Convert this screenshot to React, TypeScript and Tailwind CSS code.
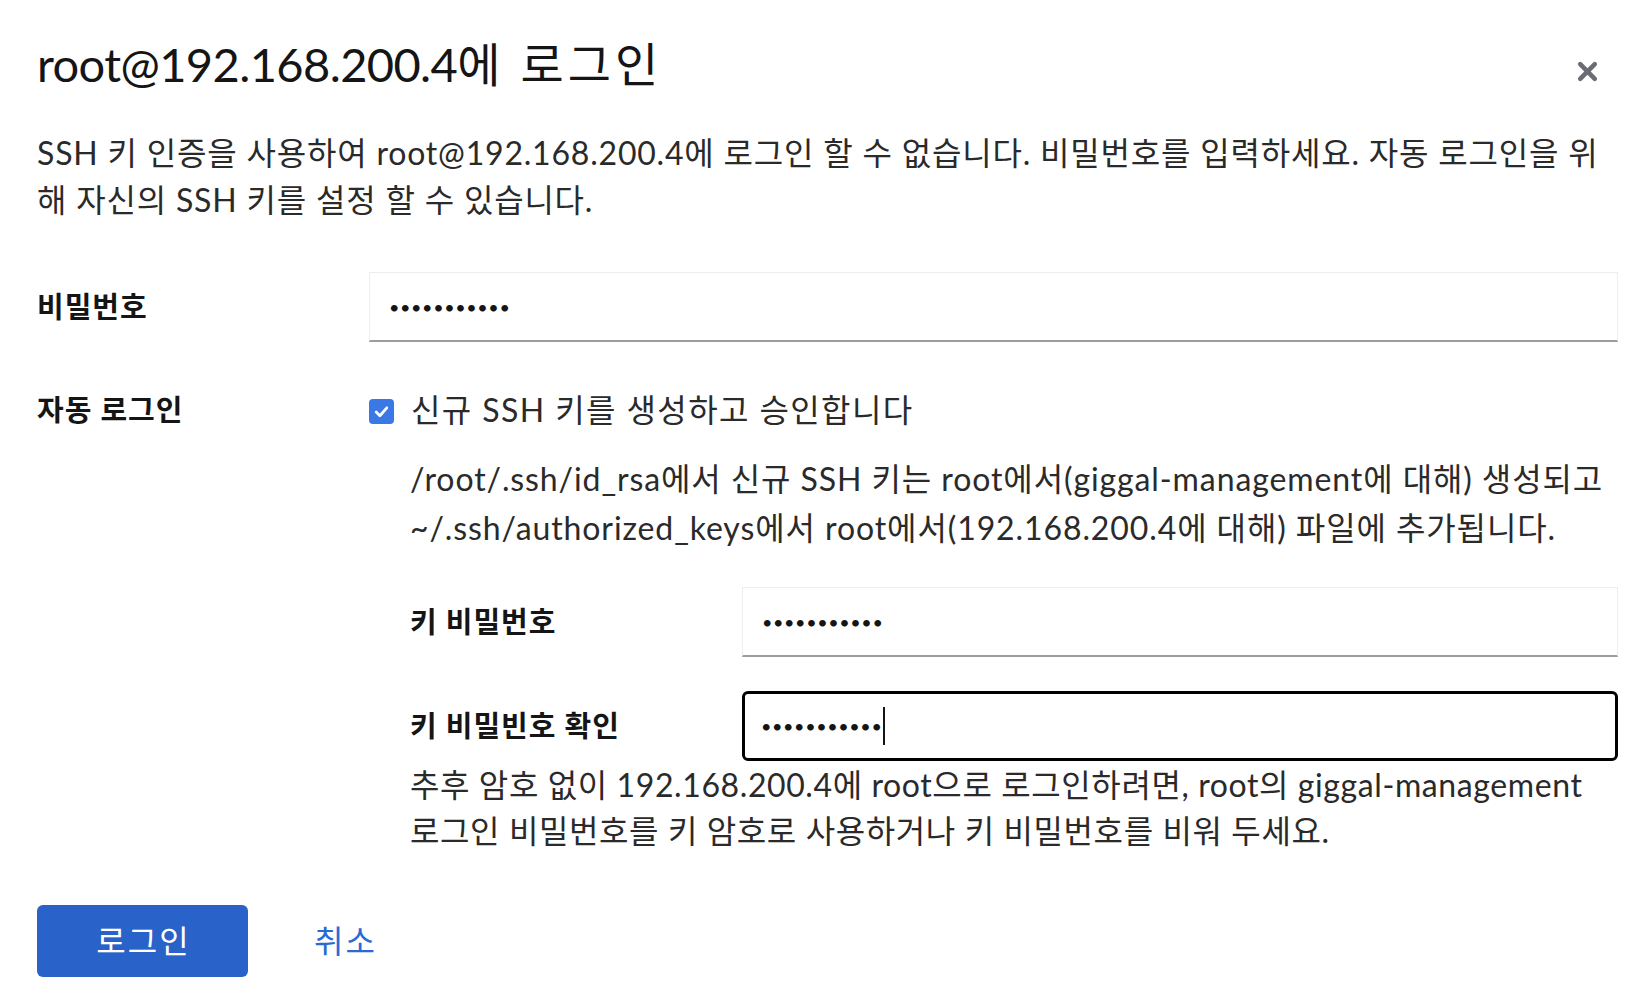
import React from 'react';

const font = "font-[Lato,'Noto_Sans_CJK_KR',sans-serif]";

function Dots({ caret = false }: { caret?: boolean }) {
  return (
    <span className="flex items-center">
      <span className="text-[18px] tracking-[0.6px] text-[#151515] leading-none">•••••••••••</span>
      {caret && <span className="ml-[1px] h-[38px] w-[2px] bg-[#151515]" />}
    </span>
  );
}

function FakeInput({ focused = false, caret = false }: { focused?: boolean; caret?: boolean }) {
  return (
    <div
      className={
        focused
          ? 'flex h-[70px] items-center rounded-[6px] border-[3px] border-black bg-white px-[16px]'
          : 'flex h-[70px] items-center border border-[#eeeeee] border-b-2 border-b-[#9a9c9e] bg-white px-[19px]'
      }
    >
      <Dots caret={caret} />
    </div>
  );
}

export default function App() {
  return (
    <div className={`${font} min-h-[1006px] w-[1652px] bg-white pl-[37px] pr-[34px] pt-[36px] text-[#1c1c1c]`}>
      {/* Header */}
      <div className="flex items-start justify-between">
        <h1 className="text-[47px] leading-[57px] tracking-[-0.6px] text-[#151515]">
          root@192.168.200.4<span className="tracking-[4px]">에 로그인</span>
        </h1>
        <button className="mr-[18px] mt-[23px] text-[#6a6e73]">
          <svg width="25" height="25" viewBox="0 0 24 24">
            <path d="M5 5 L19 19 M19 5 L5 19" stroke="currentColor" strokeWidth="4.4" strokeLinecap="round" />
          </svg>
        </button>
      </div>

      {/* Description */}
      <p className="mt-[36px] whitespace-nowrap text-[32px] leading-[47px] tracking-[0.8px] text-[#2a2a2a]">
        SSH 키 인증을 사용하여 root@192.168.200.4에 로그인 할 수 없습니다. 비밀번호를 입력하세요. 자동 로그인을 위
        <br />
        해 자신의 SSH 키를 설정 할 수 있습니다.
      </p>

      {/* Form */}
      <div className="mt-[49px] grid grid-cols-[332px_1fr] items-center">
        <label className="text-[29px] font-bold tracking-[1px] text-[#151515]">비밀번호</label>
        <FakeInput />
      </div>

      <div className="mt-[44px] grid grid-cols-[332px_1fr] items-start">
        <label className="text-[29px] font-bold leading-[47px] tracking-[1px] text-[#151515]">자동 로그인</label>
        <div>
          <div className="flex items-center gap-[17px]">
            <span className="mt-[4px] flex h-[25px] w-[25px] items-center justify-center rounded-[4px] bg-[#3a78e6]">
              <svg width="17" height="17" viewBox="0 0 16 16">
                <path d="M3 8.5 L6.5 12 L13 4.5" fill="none" stroke="white" strokeWidth="2.6" strokeLinecap="round" strokeLinejoin="round" />
              </svg>
            </span>
            <span className="text-[32px] leading-[47px] tracking-[1.4px] text-[#2a2a2a]">신규 SSH 키를 생성하고 승인합니다</span>
          </div>

          <div className="pl-[41px]">
            <p className="mt-[21px] whitespace-nowrap text-[32px] leading-[49px] tracking-[0.9px] text-[#2a2a2a]">
              /root/.ssh/id_rsa에서 신규 SSH 키는 root에서(giggal-management에 대해) 생성되고
              <br />
              ~/.ssh/authorized_keys에서 root에서(192.168.200.4에 대해) 파일에 추가됩니다.
            </p>

            <div className="mt-[35px] grid grid-cols-[332px_1fr] items-center">
              <label className="text-[29px] font-bold tracking-[1px] text-[#151515]">키 비밀번호</label>
              <FakeInput />
            </div>

            <div className="mt-[34px] grid grid-cols-[332px_1fr] items-center">
              <label className="text-[29px] font-bold tracking-[1px] text-[#151515]">키 비밀빈호 확인</label>
              <FakeInput focused caret />
            </div>

            <p className="mt-[1px] whitespace-nowrap text-[32px] leading-[46px] tracking-[0.6px] text-[#2a2a2a]">
              추후 암호 없이 192.168.200.4에 root으로 로그인하려면, root의 giggal-management
              <br />
              로그인 비밀번호를 키 암호로 사용하거나 키 비밀번호를 비워 두세요.
            </p>
          </div>
        </div>
      </div>

      {/* Footer */}
      <div className="mt-[51px] flex items-center gap-[66px]">
        <button className="h-[72px] w-[211px] rounded-[6px] bg-[#2962c8] pl-[2px] text-[32px] tracking-[2px] text-white">로그인</button>
        <button className="text-[32px] tracking-[2px] text-[#2a6bd2]">취소</button>
      </div>
    </div>
  );
}
